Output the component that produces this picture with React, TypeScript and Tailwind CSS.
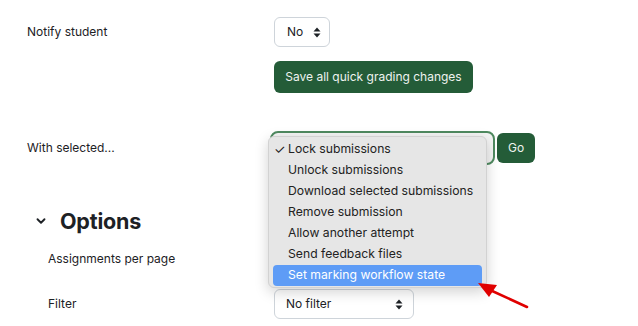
import React from "react";
import { ChevronDown } from "lucide-react";

const Arrows: React.FC = () => (
  <svg width="8" height="11" viewBox="0 0 8 11" className="shrink-0">
    <path d="M4 0.5 L7.5 4.5 H0.5 Z" fill="#1d2125" />
    <path d="M4 10.5 L7.5 6.5 H0.5 Z" fill="#1d2125" />
  </svg>
);

const menuItems = [
  "Lock submissions",
  "Unlock submissions",
  "Download selected submissions",
  "Remove submission",
  "Allow another attempt",
  "Send feedback files",
  "Set marking workflow state",
];

const App: React.FC = () => {
  return (
    <div
      className="relative w-[638px] h-[326px] overflow-hidden bg-white text-[#1d2125] text-[12px]"
      style={{ fontFamily: "Inter, 'Liberation Sans', sans-serif" }}
    >
      {/* Notify student */}
      <div className="flex items-center pl-[27px] pt-[17px]">
        <div className="w-[247px]">Notify student</div>
        <div className="flex items-center justify-between h-[30px] w-[56px] border border-[#ced4da] rounded-md pl-[12px] pr-[8px]">
          <span>No</span>
          <Arrows />
        </div>
      </div>

      {/* Save button */}
      <div className="mt-[14px] ml-[274px]">
        <button className="h-[32px] w-[199px] rounded-md bg-[#245c38] text-[#eef3ef] text-[12px]">
          Save all quick grading changes
        </button>
      </div>

      {/* With selected */}
      <div className="flex items-center pl-[27px] mt-[38px]">
        <div className="w-[243px]">With selected...</div>
        <div className="h-[34px] w-[225px] rounded-lg border-[2.5px] border-[#4f8a60] bg-[#f4f4f4]" />
        <button className="ml-[2px] h-[30px] w-[38px] rounded-md bg-[#245c38] text-[#eef3ef]">Go</button>
      </div>

      {/* Options */}
      <div className="flex items-center mt-[41px] h-[30px] pl-[34px]">
        <ChevronDown size={14} strokeWidth={3.2} className="text-[#1d2125]" />
        <span className="ml-[12px] text-[21.5px] font-bold tracking-[-0.2px]">Options</span>
      </div>

      <div className="flex items-center pl-[48px] mt-[8px] h-[30px]">
        <div className="w-[226px]">Assignments per page</div>
        <div className="h-[30px] w-[100px] border border-[#ced4da] rounded-md" />
      </div>

      <div className="flex items-center pl-[48px] mt-[15px]">
        <div className="w-[226px]">Filter</div>
        <div className="flex items-center justify-between h-[30px] w-[140px] border border-[#ced4da] rounded-md pl-[11px] pr-[10px]">
          <span>No filter</span>
          <Arrows />
        </div>
      </div>

      {/* Dropdown menu */}
      <div className="absolute left-[268px] top-[136px] w-[219px] h-[152px] rounded-md bg-[#e6e6e6] border border-[#d2d2d2] shadow-[0_4px_14px_rgba(0,0,0,0.18)] pt-[2px] px-[4px] text-[#222] text-[12.2px]">
        {menuItems.map((item, i) => (
          <div
            key={item}
            className={
              i === menuItems.length - 1
                ? "relative flex items-center h-[21px] rounded-[4px] bg-[#5e9cf6] text-white pl-[15px]"
                : "relative flex items-center h-[21px] pl-[15px]"
            }
          >
            {i === 0 && <span className="absolute left-[1px] top-[1px] text-[13px] leading-[19px]">✓</span>}
            {item}
          </div>
        ))}
      </div>

      {/* Red arrow annotation */}
      <svg className="absolute left-[470px] top-[276px]" width="70" height="40" viewBox="0 0 70 40">
        <path d="M57 31 L20 14" stroke="#e00000" strokeWidth="2.6" strokeLinecap="round" />
        <path d="M8 7 L27 9 L19 21 Z" fill="#e00000" />
      </svg>
    </div>
  );
};

export default App;
